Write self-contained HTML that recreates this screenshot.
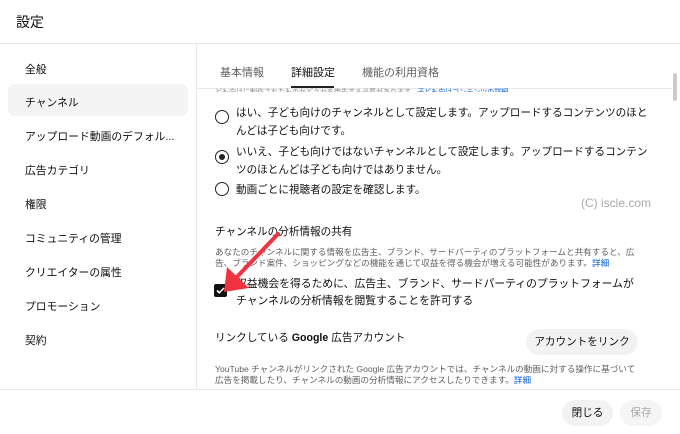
<!DOCTYPE html><html><head><meta charset="utf-8"><style>
*{margin:0;padding:0;box-sizing:border-box}
body{width:680px;height:434px;background:#fff;font-family:"Liberation Sans","Noto Sans CJK JP",sans-serif;color:#0f0f0f;position:relative;overflow:hidden}
.a{position:absolute;white-space:nowrap}
.side{font-size:10.8px;color:#0f0f0f}
.t{font-size:10.6px}
.s{font-size:8.6px;color:#606060}
.lk{color:#065fd4}
.radio{position:absolute;width:14px;height:14px;border:1.6px solid #222;border-radius:50%}
</style></head><body>
<div class="a" style="left:16px;top:12px;font-size:14px">設定</div>
<div class="a" style="left:0;top:43px;width:680px;height:1px;background:#e8e8e8"></div>
<div class="a" style="left:196px;top:44px;width:1px;height:346px;background:#e8e8e8"></div>
<div class="a" style="left:8px;top:84px;width:180px;height:32px;background:#f4f4f4;border-radius:6px"></div>
<div class="a side" style="left:25px;top:61px">全般</div>
<div class="a side" style="left:25px;top:94px">チャンネル</div>
<div class="a side" style="left:25px;top:128px">アップロード動画のデフォル...</div>
<div class="a side" style="left:25px;top:162px">広告カテゴリ</div>
<div class="a side" style="left:25px;top:196px">権限</div>
<div class="a side" style="left:25px;top:230px">コミュニティの管理</div>
<div class="a side" style="left:25px;top:264px">クリエイターの属性</div>
<div class="a side" style="left:25px;top:298px">プロモーション</div>
<div class="a side" style="left:25px;top:332px">契約</div>
<div class="a" style="left:220px;top:64px;font-size:11px;color:#606060">基本情報</div>
<div class="a" style="left:291px;top:64px;font-size:11px;color:#0f0f0f">詳細設定</div>
<div class="a" style="left:362px;top:64px;font-size:11px;color:#606060">機能の利用資格</div>
<div class="a" style="left:291px;top:86px;width:43px;height:2px;background:#222"></div>
<div class="a" style="left:197px;top:88px;width:475px;height:1px;background:#e8e8e8"></div>
<div class="a" style="left:673px;top:73px;width:4px;height:28px;background:#ccc;border-radius:2px"></div>
<div class="a s" style="left:215px;top:87px;font-size:7px;color:#888;height:5px;overflow:hidden">ども向けに制作されたものかどうかを申告する必要があります。<span class="lk">子ども向けコンテンツの詳細</span></div>
<div class="radio" style="left:215px;top:110px"></div>
<div class="a t" style="left:236px;top:104px;line-height:18px">はい、子ども向けのチャンネルとして設定します。アップロードするコンテンツのほと<br>んどは子ども向けです。</div>
<div class="radio" style="left:215px;top:150px"></div>
<div class="a" style="left:219px;top:154px;width:6px;height:6px;border-radius:50%;background:#222"></div>
<div class="a t" style="left:236px;top:143px;line-height:18px">いいえ、子ども向けではないチャンネルとして設定します。アップロードするコンテン<br>ツのほとんどは子ども向けではありません。</div>
<div class="radio" style="left:215px;top:182px"></div>
<div class="a t" style="left:236px;top:182px">動画ごとに視聴者の設定を確認します。</div>
<div class="a" style="left:581px;top:196px;font-size:12px;color:#aaa">(C) iscle.com</div>
<div class="a" style="left:215px;top:224px;font-size:10.6px">チャンネルの分析情報の共有</div>
<div class="a s" style="left:215px;top:247px;line-height:11px">あなたのチャンネルに関する情報を広告主、ブランド、サードパーティのプラットフォームと共有すると、広<br>告、ブランド案件、ショッピングなどの機能を通じて収益を得る機会が増える可能性があります。<span class="lk">詳細</span></div>
<div class="a" style="left:214px;top:284px;width:13px;height:13px;background:#111;border-radius:2px"></div>
<svg class="a" style="left:214px;top:284px" width="13" height="13"><path d="M3 6.5l2.3 2.3L10 4" stroke="#fff" stroke-width="1.6" fill="none"/></svg>
<div class="a t" style="left:236px;top:276px;line-height:17px;font-size:10.8px">収益機会を得るために、広告主、ブランド、サードパーティのプラットフォームが<br>チャンネルの分析情報を閲覧することを許可する</div>
<svg class="a" style="left:220px;top:230px" width="70" height="70"><path d="M58 4L14 50" stroke="#ef3340" stroke-width="4" stroke-linecap="round"/><path d="M4 62L7 37L29 58Z" fill="#ef3340"/></svg>
<div class="a" style="left:215px;top:330px;font-size:10.6px">リンクしている <b>Google</b> 広告アカウント</div>
<div class="a" style="left:526px;top:329px;width:112px;height:26px;background:#f2f2f2;border-radius:13px;font-size:10.6px;line-height:26px;text-align:center">アカウントをリンク</div>
<div class="a s" style="left:215px;top:364px;line-height:11px">YouTube チャンネルがリンクされた Google 広告アカウントでは、チャンネルの動画に対する操作に基づいて<br>広告を掲載したり、チャンネルの動画の分析情報にアクセスしたりできます。<span class="lk">詳細</span></div>
<div class="a" style="left:0;top:389px;width:680px;height:1px;background:#e8e8e8"></div>
<div class="a" style="left:562px;top:400px;width:51px;height:26px;background:#f2f2f2;border-radius:13px;font-size:10.6px;line-height:26px;text-align:center">閉じる</div>
<div class="a" style="left:620px;top:400px;width:42px;height:26px;background:#f5f5f5;border-radius:13px;font-size:10.6px;line-height:26px;text-align:center;color:#aaa">保存</div>
</body></html>
